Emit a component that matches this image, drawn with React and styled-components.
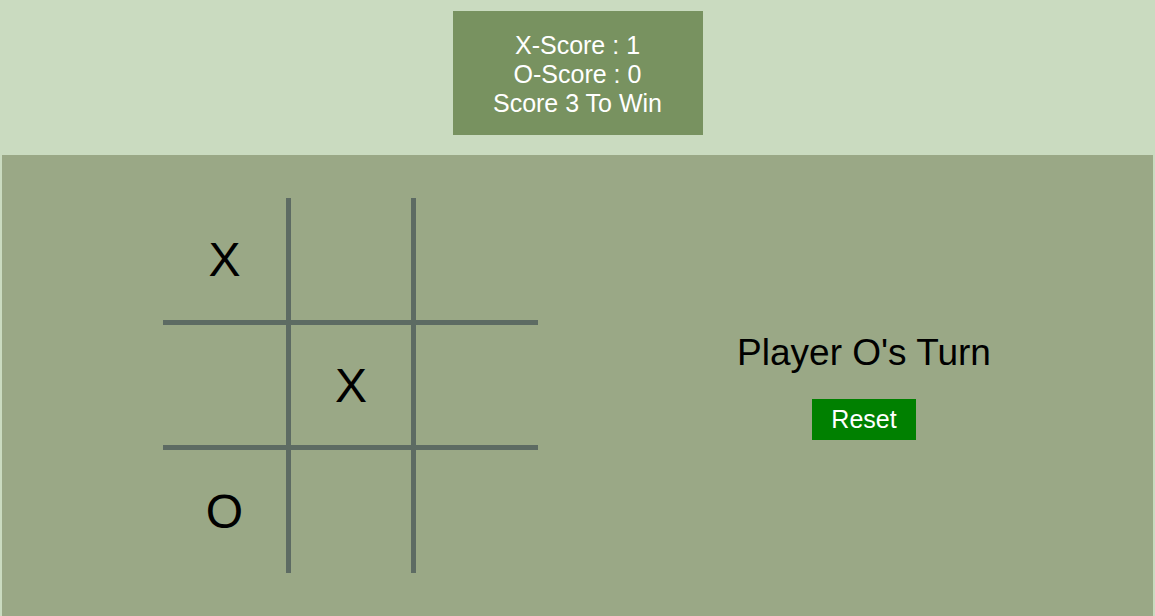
import React, { useState } from 'react';
import styled, { createGlobalStyle } from 'styled-components';

const GlobalStyle = createGlobalStyle`
  html, body {
    margin: 0;
    padding: 0;
    background-color: #cadbc0;
    font-family: "Liberation Sans", Arial, sans-serif;
  }
`;

const initialBoard = ['X', '', '', '', 'X', '', 'O', '', ''];

const App = () => {
  const [board] = useState(initialBoard);
  const [scores] = useState({ x: 1, o: 0 });

  return (
    <Page>
      <GlobalStyle />
      <Header>
        <ScoreBox>
          <div>X-Score : {scores.x}</div>
          <div>O-Score : {scores.o}</div>
          <div>Score 3 To Win</div>
        </ScoreBox>
      </Header>
      <Main>
        <Board>
          {board.map((value, i) => (
            <Cell key={i} col={i % 3} row={Math.floor(i / 3)}>
              {value}
            </Cell>
          ))}
        </Board>
        <Info>
          <Turn>Player O's Turn</Turn>
          <ResetButton>Reset</ResetButton>
        </Info>
      </Main>
    </Page>
  );
};

const Page = styled.div`
  min-height: 100vh;
  display: flex;
  flex-direction: column;
`;

const Header = styled.header`
  display: flex;
  justify-content: center;
  padding: 11px 0 20px;
`;

const ScoreBox = styled.div`
  width: 250px;
  height: 124px;
  box-sizing: border-box;
  padding-top: 20px;
  background-color: #789260;
  color: #ffffff;
  font-size: 25px;
  line-height: 29px;
  text-align: center;
`;

const Main = styled.main`
  flex: 1;
  margin: 0 2px;
  background-color: #9aa886;
  display: grid;
  grid-template-columns: 375px 300px;
  column-gap: 176px;
  align-items: center;
  align-content: start;
  padding: 43px 0 40px 161px;
`;

const Board = styled.div`
  display: grid;
  grid-template-columns: 123px 125px 127px;
  grid-template-rows: 122px 125px 128px;
`;

const Cell = styled.div`
  box-sizing: border-box;
  display: flex;
  align-items: center;
  justify-content: center;
  font-size: 48px;
  color: #000000;
  border-left: ${props => (props.col > 0 ? '5px solid #5d6b63' : 'none')};
  border-top: ${props => (props.row > 0 ? '5px solid #5d6b63' : 'none')};
`;

const Info = styled.div`
  display: flex;
  flex-direction: column;
  align-items: center;
`;

const Turn = styled.div`
  font-size: 37px;
  color: #000000;
  margin-bottom: 25px;
`;

const ResetButton = styled.button`
  height: 41px;
  padding: 0 19px;
  border: none;
  background-color: #008000;
  color: #ffffff;
  font-family: "Liberation Sans", Arial, sans-serif;
  font-size: 25px;
  line-height: 41px;
  cursor: pointer;
`;

export default App;
